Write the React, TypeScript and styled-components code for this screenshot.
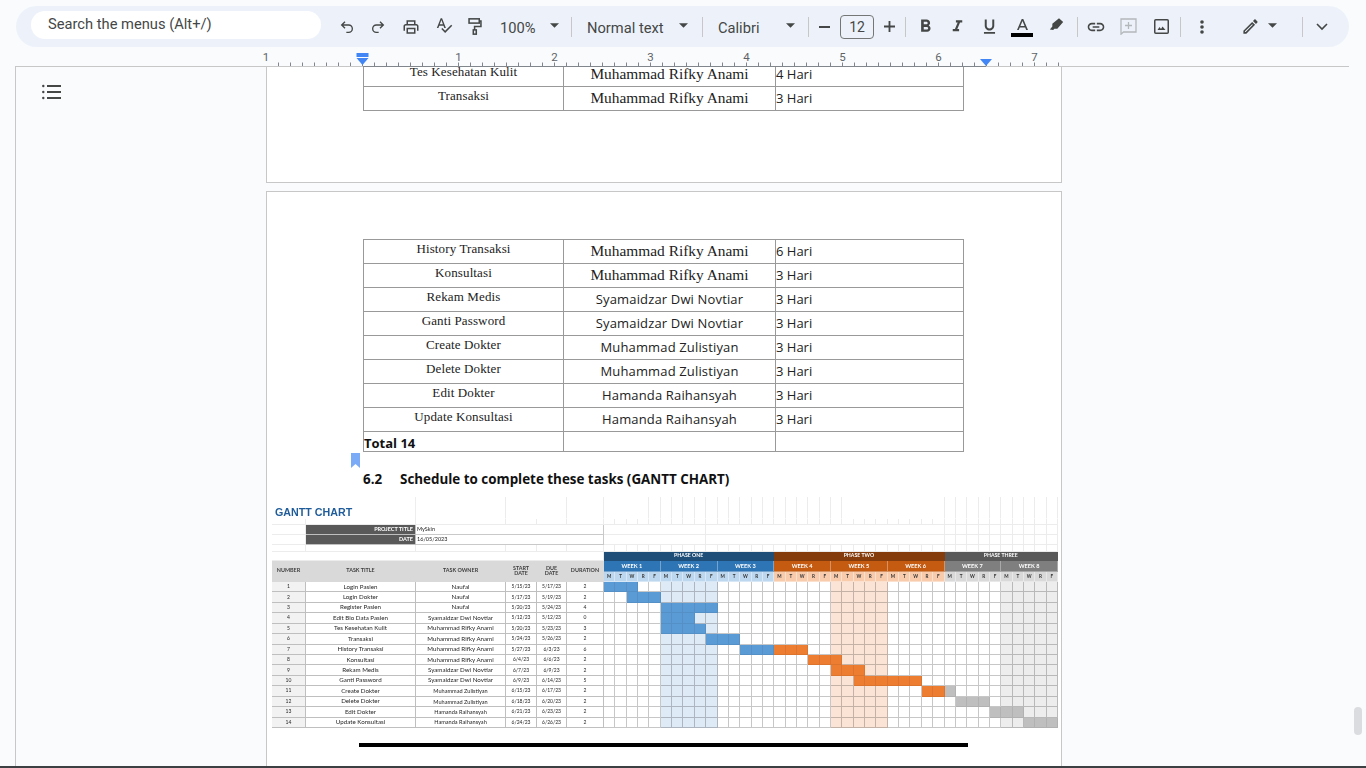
import React from "react";
import styled, { createGlobalStyle } from "styled-components";

const Global = createGlobalStyle`
  html, body { margin: 0; padding: 0; background: #f9fbfd; overflow: hidden; }
  body { font-family: Roboto, "Liberation Sans", sans-serif; }
`;

const Shell = styled.div`
  position: relative;
  height: 766px;
  display: flex;
  flex-direction: column;
  overflow: hidden;
  background: #f9fbfd;
  border-bottom: 2px solid #3c4043;
`;

const Toolbar = styled.div`
  flex: none;
  margin: 6px 17px 0 16px;
  height: 41px;
  border-radius: 21px;
  background: #edf2fa;
  display: flex;
  align-items: center;
  padding-left: 15px;
  color: #444746;
`;

const Search = styled.div`
  flex: none;
  width: 273px;
  height: 28px;
  margin: -3px 10px 0 0;
  padding-left: 17px;
  border-radius: 14px;
  background: #fff;
  font-size: 14.7px;
  line-height: 27px;
  color: #444746;
`;

const Tool = styled.div<{ $w: number; $ml?: number; $up?: number }>`
  flex: none;
  width: ${(p) => p.$w}px;
  margin-left: ${(p) => p.$ml ?? 0}px;
  height: 28px;
  padding-bottom: ${(p) => p.$up ?? 0}px;
  box-sizing: border-box;
  display: flex;
  align-items: center;
  justify-content: center;
  position: relative;
`;

const Label = styled.div<{ $w: number; $ml?: number }>`
  flex: none;
  width: ${(p) => p.$w}px;
  margin: 2px 0 0 ${(p) => p.$ml ?? 0}px;
  font-size: 14.7px;
  line-height: 28px;
  white-space: nowrap;
  color: #444746;
`;

const Divider = styled.div`
  flex: none;
  width: 1px;
  height: 20px;
  background: #c7c7c7;
`;

const SizeBox = styled.div`
  flex: none;
  box-sizing: border-box;
  width: 34px;
  height: 24px;
  border: 1px solid #747775;
  border-radius: 4px;
  text-align: center;
  font-size: 14px;
  line-height: 22px;
  color: #444746;
`;

const ColorBar = styled.div`
  position: absolute;
  left: 3px;
  bottom: 4px;
  width: 22px;
  height: 4px;
  background: #000;
`;

const RulerSvg = styled.svg`
  flex: none;
  display: block;
  width: 1366px;
  height: 20px;
`;

const RulerNum = styled.text`
  font-family: Roboto, sans-serif;
  font-size: 11.5px;
  fill: #5f6368;
  text-anchor: middle;
`;

const Canvas = styled.div`
  flex: 1;
  min-height: 0;
  margin-left: 15px;
  border-left: 1px solid #c7c7c7;
  display: flex;
  overflow: hidden;
`;

const Sidebar = styled.div`
  flex: none;
  width: 250px;
  box-sizing: border-box;
  padding: 17px 0 0 26px;
`;

const Pages = styled.div`
  flex: none;
  width: 796px;
  margin-top: -5px;
  display: flex;
  flex-direction: column;
  gap: 8px;
`;

const Page = styled.div<{ $h?: number }>`
  flex: none;
  box-sizing: border-box;
  position: relative;
  background: #fff;
  border: 1px solid #c7c7c7;
  ${(p) => (p.$h ? `height: ${p.$h}px; border-top: none;` : "padding: 47px 0 40px; border-bottom: none;")}
`;

const Table = styled.table`
  margin-left: 96px;
  width: 600px;
  border-collapse: collapse;
  table-layout: fixed;
`;

const Row = styled.tr<{ $h?: number }>`
  height: ${(p) => p.$h ?? 24}px;
`;

const cellBase = `
  box-sizing: border-box;
  border: 1px solid #999;
  padding: 0;
  white-space: nowrap;
`;

const TaskCell = styled.td`
  ${cellBase}
  width: 200px;
  text-align: center;
  vertical-align: top;
  font-family: "Liberation Serif", serif;
  font-size: 13px;
  letter-spacing: 0.12px;
  line-height: 18px;
  color: #222;
`;

const OwnerCell = styled.td<{ $serif?: boolean }>`
  ${cellBase}
  width: 212px;
  padding-bottom: 2px;
  text-align: center;
  vertical-align: middle;
  font-family: ${(p) => (p.$serif ? '"Liberation Serif", serif' : '"Open Sans", sans-serif')};
  font-size: ${(p) => (p.$serif ? "15.4px" : "13px")};
  letter-spacing: ${(p) => (p.$serif ? "0" : "0.15px")};
  color: #222;
`;

const DaysCell = styled.td`
  ${cellBase}
  width: 188px;
  padding-bottom: 2px;
  vertical-align: middle;
  font-family: "Open Sans", sans-serif;
  font-size: 13px;
  color: #222;
`;

const TotalCell = styled.td`
  ${cellBase}
  font-family: "Open Sans", sans-serif;
  font-size: 13px;
  font-weight: 700;
  vertical-align: bottom;
  line-height: 15px;
  color: #111;
`;

const Bookmark = styled.svg`
  position: absolute;
  left: 84px;
  top: 261px;
  width: 9px;
  height: 15px;
`;

const Heading = styled.div`
  margin: 18px 0 0 96px;
  height: 18px;
  display: flex;
  font-family: "Open Sans", sans-serif;
  font-size: 13.4px;
  font-weight: 700;
  line-height: 18px;
  color: #111;
  white-space: nowrap;
`;

const HeadingNum = styled.span`
  flex: none;
  width: 37px;
`;

const Gantt = styled.div`
  margin: 9px 0 0 5px;
  width: 786px;
  height: 231px;
  display: grid;
  grid-template-columns: 34px 110px 90px 31px 30px 37px repeat(40, 1fr);
  grid-template-rows: 22px 6px 10px 10px 7px 9px 11px 10px repeat(14, 1fr);
  font-family: Lato, sans-serif;
  filter: blur(0.3px);
`;

const G = styled.div<{ $col?: number; $row?: number; $bg?: string; $line?: string; $fg?: string; $size?: number; $bold?: boolean; $align?: string; $pad?: number; $hideR?: boolean; $hideB?: boolean }>`
  box-sizing: border-box;
  min-width: 0;
  min-height: 0;
  overflow: hidden;
  display: flex;
  align-items: center;
  white-space: nowrap;
  justify-content: ${(p) => p.$align ?? "center"};
  grid-column: span ${(p) => p.$col ?? 1};
  grid-row: span ${(p) => p.$row ?? 1};
  background: ${(p) => p.$bg ?? "transparent"};
  border-right: 1px solid ${(p) => (p.$hideR ? "transparent" : p.$line ?? "#bfbfbf")};
  border-bottom: 1px solid ${(p) => (p.$hideB ? "transparent" : p.$line ?? "#bfbfbf")};
  color: ${(p) => p.$fg ?? "#262626"};
  font-size: ${(p) => p.$size ?? 6.2}px;
  font-weight: ${(p) => (p.$bold ? 700 : 400)};
  line-height: 1;
  padding: 0 ${(p) => p.$pad ?? 0}px;
  text-align: center;
`;

const GanttTitle = styled.div`
  grid-column: span 2;
  display: flex;
  align-items: flex-end;
  padding: 0 0 1px 3px;
  font-family: "Liberation Sans", sans-serif;
  font-size: 10.7px;
  font-weight: 700;
  color: #1f5c99;
  border-right: 1px solid #eee;
`;

const Rule = styled.div`
  margin: 15px 0 0 92px;
  width: 609px;
  height: 4px;
  background: #000;
`;

const Thumb = styled.div`
  position: absolute;
  left: 1354px;
  top: 707px;
  width: 8px;
  height: 28px;
  border-radius: 4px;
  background: #dadce0;
`;

const I = ({ s = 18, children }: { s?: number; children: React.ReactNode }) => (
  <svg width={s} height={s} viewBox="0 0 24 24" fill="#444746">{children}</svg>
);
const Caret = () => (
  <svg width="9" height="5" viewBox="0 0 10 5" fill="#444746"><path d="M0 0h10L5 5z" /></svg>
);

const F1 = [
  ["History Transaksi", "Muhammad Rifky Anami", "6 Hari", true],
  ["Konsultasi", "Muhammad Rifky Anami", "3 Hari", true],
  ["Rekam Medis", "Syamaidzar Dwi Novtiar", "3 Hari", false],
  ["Ganti Password", "Syamaidzar Dwi Novtiar", "3 Hari", false],
  ["Create Dokter", "Muhammad Zulistiyan", "3 Hari", false],
  ["Delete Dokter", "Muhammad Zulistiyan", "3 Hari", false],
  ["Edit Dokter", "Hamanda Raihansyah", "3 Hari", false],
  ["Update Konsultasi", "Hamanda Raihansyah", "3 Hari", false],
] as const;

type Task = [string, string, string, string, number, number, number];
const TASKS: Task[] = [
  ["Login Pasien", "Naufal", "5/15/23", "5/17/23", 2, 0, 3],
  ["Login Dokter", "Naufal", "5/17/23", "5/19/23", 2, 2, 3],
  ["Register Pasien", "Naufal", "5/20/23", "5/24/23", 4, 5, 5],
  ["Edit Bio Data Pasien", "Syamaidzar Dwi Novtiar", "5/12/23", "5/12/23", 0, 5, 3],
  ["Tes Kesehatan Kulit", "Muhammad Rifky Anami", "5/20/23", "5/23/23", 3, 5, 4],
  ["Transaksi", "Muhammad Rifky Anami", "5/24/23", "5/26/23", 2, 9, 3],
  ["History Transaksi", "Muhammad Rifky Anami", "5/27/23", "6/3/23", 6, 12, 6],
  ["Konsultasi", "Muhammad Rifky Anami", "6/4/23", "6/6/23", 2, 18, 3],
  ["Rekam Medis", "Syamaidzar Dwi Novtiar", "6/7/23", "6/9/23", 2, 20, 3],
  ["Ganti Password", "Syamaidzar Dwi Novtiar", "6/9/23", "6/14/23", 5, 22, 6],
  ["Create Dokter", "Muhammad Zulistiyan", "6/15/23", "6/17/23", 2, 28, 3],
  ["Delete Dokter", "Muhammad Zulistiyan", "6/18/23", "6/20/23", 2, 31, 3],
  ["Edit Dokter", "Hamanda Raihansyah", "6/21/23", "6/23/23", 2, 34, 3],
  ["Update Konsultasi", "Hamanda Raihansyah", "6/24/23", "6/26/23", 2, 37, 3],
];

const DAY40 = Array.from({ length: 40 }, (_, i) => i);
const WEEKS = ["WEEK 1", "WEEK 2", "WEEK 3", "WEEK 4", "WEEK 5", "WEEK 6", "WEEK 7", "WEEK 8"];
const LETTERS = ["M", "T", "W", "R", "F"];
const HEADERS = ["NUMBER", "TASK TITLE", "TASK OWNER", "START DATE", "DUE DATE", "DURATION"];
const FAINT = "#ececec";

const phaseColors = (week: number) =>
  week < 3
    ? { week: "#2e75b6", day: "#bdd7ee", bar: "#5b9bd5", tint: "#deeaf6" }
    : week < 6
    ? { week: "#c55a11", day: "#f8cbad", bar: "#ed7d31", tint: "#fbe4d5" }
    : { week: "#7f7f7f", day: "#d9d9d9", bar: "#bfbfbf", tint: "#ededed" };

const barColor = (task: number, day: number) => {
  if (task === 10 && day === 30) return "#bfbfbf";
  return phaseColors(Math.floor(day / 5)).bar;
};

const Ruler = () => {
  const ticks: React.ReactNode[] = [];
  for (let x = 278; x <= 1062; x += 12) {
    const isInch = (x - 363 + 960) % 96 === 0;
    const isHalf = (x - 363 + 960) % 48 === 0 && !isInch;
    if (isInch) continue;
    ticks.push(<line key={x} x1={x + 0.5} x2={x + 0.5} y1={isHalf ? 11 : 15.5} y2={19} stroke="#80868b" />);
  }
  return (
    <RulerSvg viewBox="0 0 1366 20">
      <line x1="15" x2="1349" y1="19.5" y2="19.5" stroke="#c7c7c7" />
      <line x1="363" x2="986" y1="19.5" y2="19.5" stroke="#80868b" />
      {ticks}
      {[[266.5, "1"], [459, "1"], [555, "2"], [651, "3"], [747, "4"], [843, "5"], [939, "6"], [1035, "7"]].map(([x, t]) => (
        <RulerNum key={String(x) + t} x={Number(x) - 0.5} y={14}>{t}</RulerNum>
      ))}
      <rect x="356.5" y="6" width="12" height="4" fill="#4285f4" />
      <path d="M356.5 11h12l-6 7z" fill="#4285f4" />
      <path d="M980 12h12l-6 7z" fill="#4285f4" />
    </RulerSvg>
  );
};

const GanttChart = () => (
  <Gantt>
    <GanttTitle>GANTT CHART</GanttTitle>
    <G $line={FAINT} $hideB />
    <G $col={2} $line={FAINT} $hideB />
    <G $line={FAINT} $hideB />
    {DAY40.map((d) => (
      <G key={d} $line={FAINT} $hideB $hideR={d < 3 || (d >= 21 && d < 29)} />
    ))}

    {HEADERS.map((h) => <G key={h} $line={FAINT} />)}
    {DAY40.map((d) => <G key={d} $line={FAINT} />)}

    <G $line={FAINT} />
    <G $bg="#595959" $fg="#fff" $bold $size={5.5} $align="flex-end" $pad={2}>PROJECT TITLE</G>
    <G $col={4} $line="#c9c9c9" $align="flex-start" $pad={1} $size={5.5} $fg="#222">MySkin</G>
    <G $col={9} $line={FAINT} />
    <G $col={21} $line={FAINT} />
    {DAY40.slice(30).map((d) => <G key={d} $line={FAINT} />)}

    <G $line={FAINT} />
    <G $bg="#595959" $fg="#fff" $bold $size={5.5} $align="flex-end" $pad={2}>DATE</G>
    <G $col={4} $line="#c9c9c9" $align="flex-start" $pad={1} $size={5.5} $fg="#222">16/05/2023</G>
    <G $col={9} $line={FAINT} />
    <G $col={21} $line={FAINT} />
    {DAY40.slice(30).map((d) => <G key={d} $line={FAINT} />)}

    {HEADERS.map((h) => <G key={h} $line={FAINT} />)}
    {DAY40.map((d) => <G key={d} $line={FAINT} />)}

    <G $col={6} $line={FAINT} />
    <G $col={15} $bg="#1f4e79" $line="#1f4e79" $fg="#fff" $bold $size={5.2}>PHASE ONE</G>
    <G $col={15} $bg="#843c0c" $line="#843c0c" $fg="#fff" $bold $size={5.2}>PHASE TWO</G>
    <G $col={10} $bg="#595959" $line="#595959" $fg="#fff" $bold $size={5.2}>PHASE THREE</G>

    {HEADERS.map((h) => (
      <G key={h} $row={2} $bg="#d9d9d9" $line="#d9d9d9" $bold $size={5.4} $fg="#404040">
        {h === "START DATE" ? <span>START<br />DATE</span> : h === "DUE DATE" ? <span>DUE<br />DATE</span> : h}
      </G>
    ))}
    {WEEKS.map((w, i) => (
      <G key={w} $col={5} $bg={phaseColors(i).week} $line="#ffffff55" $fg="#fff" $bold $size={5.6}>{w}</G>
    ))}
    {DAY40.map((d) => (
      <G key={d} $bg={phaseColors(Math.floor(d / 5)).day} $line="#ffffff66" $bold $size={4.6} $fg="#333">{LETTERS[d % 5]}</G>
    ))}

    {TASKS.map(([title, owner, start, due, dur, from, len], r) => (
      <React.Fragment key={r}>
        <G $bg="#f2f2f2" $size={5}>{r + 1}</G>
        <G>{title}</G>
        <G $size={r >= 10 ? 5.6 : 6.2}>{owner}</G>
        <G $size={5}>{start}</G>
        <G $size={5}>{due}</G>
        <G $size={5}>{dur}</G>
        {DAY40.map((d) => {
          const w = Math.floor(d / 5);
          const isBar = d >= from && d < from + len;
          const tint = w === 1 || w === 4 || w === 7 ? phaseColors(w).tint : "#fff";
          return (
            <G
              key={d}
              $bg={isBar ? barColor(r, d) : tint}
              $line={isBar ? "#00000012" : "#00000038"}
            />
          );
        })}
      </React.Fragment>
    ))}
  </Gantt>
);

export default function App() {
  return (
    <Shell>
      <Global />
      <Toolbar>
        <Search>Search the menus (Alt+/)</Search>
        <Tool $w={32}>
          <I s={16}><path d="M9 14 4 9l5-5M4 9h10.5a5.5 5.5 0 0 1 0 11H11" fill="none" stroke="#444746" strokeWidth="2" /></I>
        </Tool>
        <Tool $w={30}>
          <I s={16}><path d="m15 14 5-5-5-5M20 9H9.5a5.5 5.5 0 0 0 0 11H13" fill="none" stroke="#444746" strokeWidth="2" /></I>
        </Tool>
        <Tool $w={36}>
          <I s={18}><path d="M19 8h-1V3H6v5H5c-1.66 0-3 1.34-3 3v6h4v4h12v-4h4v-6c0-1.66-1.34-3-3-3zM8 5h8v3H8V5zm8 14H8v-4h8v4zm2-2v-4H6v4H4v-6c0-.55.45-1 1-1h14c.55 0 1 .45 1 1v6h-2z" /></I>
        </Tool>
        <Tool $w={30} $up={3}>
          <I s={18}><path d="M12.45 16h2.09L9.43 3H7.57L2.46 16h2.09l1.12-3h5.64l1.14 3zm-6.02-5L8.5 5.48 10.57 11H6.43zm15.16.59l-8.09 8.09L9.83 16l-1.41 1.41 5.09 5.09L23 13l-1.41-1.41z" /></I>
        </Tool>
        <Tool $w={32} $up={1}>
          <svg width="14" height="17" viewBox="0 0 16 20" fill="none" stroke="#444746" strokeWidth="1.8">
            <rect x="1" y="1" width="12" height="5" />
            <path d="M13 3.5h2V10H7.5v4" />
            <rect x="6" y="14" width="3.5" height="5" />
          </svg>
        </Tool>
        <Label $w={37} $ml={9}>100%</Label>
        <Tool $w={34} $up={2}><Caret /></Tool>
        <Divider />
        <Label $w={77} $ml={15}>Normal text</Label>
        <Tool $w={38} $up={2}><Caret /></Tool>
        <Divider />
        <Label $w={54} $ml={15}>Calibri</Label>
        <Tool $w={36} $up={2}><Caret /></Tool>
        <Divider />
        <Tool $w={31}>
          <svg width="11" height="2" viewBox="0 0 11 2"><rect width="11" height="2" fill="#444746" /></svg>
        </Tool>
        <SizeBox>12</SizeBox>
        <Tool $w={31}>
          <svg width="11" height="11" viewBox="0 0 12 12" fill="#444746"><path d="M5 0h2v5h5v2H7v5H5V7H0V5h5z" /></svg>
        </Tool>
        <Divider />
        <Tool $w={38}>
          <I s={21}><path d="M15.6 10.79c.97-.67 1.65-1.77 1.65-2.79 0-2.26-1.75-4-4-4H7v14h7.04c2.09 0 3.71-1.7 3.71-3.79 0-1.52-.86-2.82-2.15-3.42zM10 6.5h3c.83 0 1.5.67 1.5 1.5s-.67 1.5-1.5 1.5h-3v-3zm3.5 9H10v-3h3.5c.83 0 1.5.67 1.5 1.5s-.67 1.5-1.5 1.5z" /></I>
        </Tool>
        <Tool $w={26}>
          <I s={19}><path d="M10 4v3h2.21l-3.42 8H6v3h8v-3h-2.21l3.42-8H18V4z" /></I>
        </Tool>
        <Tool $w={38}>
          <I s={19}><path d="M12 17c3.31 0 6-2.69 6-6V3h-2.5v8c0 1.93-1.57 3.5-3.5 3.5S8.5 12.93 8.5 11V3H6v8c0 3.31 2.69 6 6 6zm-7 2v2h14v-2H5z" /></I>
        </Tool>
        <Tool $w={28} $up={5}>
          <svg width="13" height="11" viewBox="0 0 16 14">
            <path d="M7 0 1 14h2.2l1.3-3.2h6.9L12.7 14H15L9 0H7zM5.3 8.8 8 2.6l2.6 6.2H5.3z" fill="#444746" />
          </svg>
          <ColorBar />
        </Tool>
        <Tool $w={41} $up={5}>
          <svg width="15" height="15" viewBox="0 0 18 18" fill="#444746">
            <path d="M12 1.5 17 6l-7 8H6.5L5 15.5 1 15l3-3.5V8z" />
          </svg>
        </Tool>
        <Divider />
        <Tool $w={36}>
          <I s={20}><path d="M3.9 12c0-1.71 1.39-3.1 3.1-3.1h4V7H7c-2.76 0-5 2.24-5 5s2.24 5 5 5h4v-1.9H7c-1.71 0-3.1-1.39-3.1-3.1zM8 13h8v-2H8v2zm9-6h-4v1.9h4c1.71 0 3.1 1.39 3.1 3.1s-1.39 3.1-3.1 3.1h-4V17h4c2.76 0 5-2.24 5-5s-2.24-5-5-5z" /></I>
        </Tool>
        <Tool $w={28}>
          <svg width="17" height="17" viewBox="0 0 17 17" fill="none" stroke="#b4b8bc" strokeWidth="1.3">
            <path d="M1 1h15v13H3.5L1 16.2z" />
            <path d="M8.5 4v7M5 7.5h7" />
          </svg>
        </Tool>
        <Tool $w={38}>
          <svg width="15" height="15" viewBox="0 0 15 15">
            <rect x="0.75" y="0.75" width="13.5" height="13.5" rx="1" fill="none" stroke="#444746" strokeWidth="1.5" />
            <path d="M3.5 11 5.5 8l1.5 2 1.5-2.5L11.5 11z" fill="#444746" />
          </svg>
        </Tool>
        <Divider />
        <Tool $w={42}>
          <svg width="4" height="14" viewBox="0 0 4 14" fill="#444746"><circle cx="2" cy="2" r="1.8" /><circle cx="2" cy="7" r="1.8" /><circle cx="2" cy="12" r="1.8" /></svg>
        </Tool>
        <Tool $w={20} $ml={17} $up={1}>
          <I s={19}><path d="M3 17.25V21h3.75L17.81 9.94l-3.75-3.75L3 17.25zM5.92 19H5v-.92l9.06-9.06.92.92L5.92 19zM20.71 5.63l-2.34-2.34c-.39-.39-1.02-.39-1.41 0l-1.83 1.83 3.75 3.75 1.83-1.83c.39-.39.39-1.02 0-1.41z" /></I>
        </Tool>
        <Tool $w={24} $up={2}><Caret /></Tool>
        <Tool $w={18} />
        <Divider />
        <Tool $w={38}>
          <svg width="12" height="8" viewBox="0 0 12 8" fill="none" stroke="#444746" strokeWidth="1.6"><path d="m1 1 5 5 5-5" /></svg>
        </Tool>
      </Toolbar>
      <Ruler />
      <Canvas>
        <Sidebar>
          <svg width="19" height="16" viewBox="0 0 19 16" fill="#444746">
            <circle cx="1.3" cy="2" r="1.2" /><circle cx="1.3" cy="8" r="1.2" /><circle cx="1.3" cy="14" r="1.2" />
            <rect x="5" y="1" width="14" height="2" /><rect x="5" y="7" width="14" height="2" /><rect x="5" y="13" width="14" height="2" />
          </svg>
        </Sidebar>
        <Pages>
          <Page $h={121}>
            <Table>
              <tbody>
                <Row><TaskCell>Tes Kesehatan Kulit</TaskCell><OwnerCell $serif>Muhammad Rifky Anami</OwnerCell><DaysCell>4 Hari</DaysCell></Row>
                <Row><TaskCell>Transaksi</TaskCell><OwnerCell $serif>Muhammad Rifky Anami</OwnerCell><DaysCell>3 Hari</DaysCell></Row>
              </tbody>
            </Table>
          </Page>
          <Page>
            <Table>
              <tbody>
                {F1.map(([t, o, d, serif]) => (
                  <Row key={t}><TaskCell>{t}</TaskCell><OwnerCell $serif={serif}>{o}</OwnerCell><DaysCell>{d}</DaysCell></Row>
                ))}
                <Row $h={20}><TotalCell>Total 14</TotalCell><TotalCell /><TotalCell /></Row>
              </tbody>
            </Table>
            <Bookmark viewBox="0 0 9 15"><path d="M0 0h9v15L4.5 11 0 15z" fill="#7baaf7" /></Bookmark>
            <Heading><HeadingNum>6.2</HeadingNum>Schedule to complete these tasks (GANTT CHART)</Heading>
            <GanttChart />
            <Rule />
          </Page>
        </Pages>
      </Canvas>
      <Thumb />
    </Shell>
  );
}
